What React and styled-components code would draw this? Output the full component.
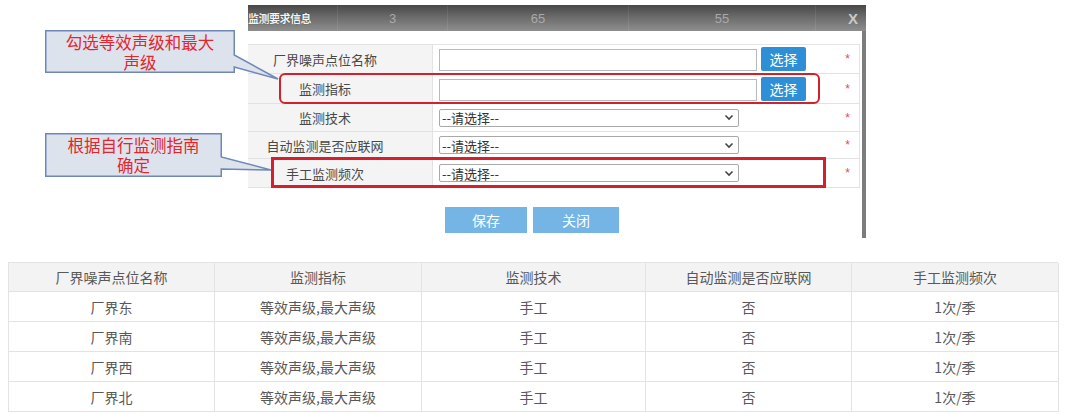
import React from "react";
import styled, { createGlobalStyle } from "styled-components";

const Global = createGlobalStyle`
  html, body { margin: 0; padding: 0; background: #fff; }
  body { width: 1080px; height: 414px; overflow: hidden; font-family: "Noto Sans CJK SC", "Noto Sans", sans-serif; }
`;

const Page = styled.div`
  display: flex;
  flex-direction: column;
  width: 1080px;
  height: 414px;
`;

const TopArea = styled.div`
  position: relative;
  padding: 5px 0 0 248px;
  height: 233px;
`;

const Dialog = styled.div`
  width: 618px;
  height: 233px;
  display: flex;
  flex-direction: column;
`;

const TitleBar = styled.div`
  height: 26px;
  display: grid;
  grid-template-columns: 89px 110px 181px 187px 51px;
  background: linear-gradient(#474747 0%, #6a6a6a 45%, #8e8e8e 100%);
  overflow: hidden;
`;

const TitleCell = styled.div`
  display: flex;
  align-items: center;
  justify-content: ${(p) => (p.$left ? "flex-start" : "center")};
  border-left: ${(p) => (p.$left ? "none" : "1px solid rgba(255,255,255,0.08)")};
  color: ${(p) => (p.$left ? "#f4f4f4" : "#a9a9a9")};
  font-size: ${(p) => (p.$left ? "11px" : "13px")};
  font-weight: ${(p) => (p.$left ? 700 : 400)};
  font-family: ${(p) => (p.$left ? '"Noto Sans CJK SC", sans-serif' : '"Liberation Sans", Arial, sans-serif')};
  white-space: nowrap;
  text-shadow: ${(p) => (p.$left ? "0 0 1px #222" : "none")};
`;

const TitleText = styled.span`
  letter-spacing: -0.5px;
`;

const CloseX = styled.span`
  margin-left: 24px;
  color: #c9c9c9;
  font-size: 15px;
  font-weight: 700;
  font-family: "Liberation Sans", Arial, sans-serif;
`;

const Body = styled.div`
  flex: 1;
  background: #fff;
  border-right: 4px solid #7c7c7c;
  padding: 13px 2px 0 0;
  display: flex;
  flex-direction: column;
`;

const Form = styled.div`
  position: relative;
  display: grid;
  grid-template-columns: 185px 402px 25px;
  border-top: 1px solid #e4e4e4;
  border-right: 1px solid #e4e4e4;
`;

const Label = styled.div`
  height: ${(p) => p.$h}px;
  display: flex;
  align-items: center;
  justify-content: center;
  padding-right: 30px;
  background: #f4f4f4;
  border-bottom: 1px solid #e2e2e2;
  border-right: 1px solid #e2e2e2;
  color: #484848;
  font-size: 13px;
  box-sizing: border-box;
  white-space: nowrap;
`;

const Value = styled.div`
  height: ${(p) => p.$h}px;
  display: flex;
  align-items: center;
  gap: 4px;
  padding-left: 6px;
  border-bottom: 1px solid #e2e2e2;
  box-sizing: border-box;
`;

const Req = styled.div`
  height: ${(p) => p.$h}px;
  display: flex;
  align-items: center;
  justify-content: center;
  color: #e04a5e;
  font-size: 12px;
  border-bottom: 1px solid #e2e2e2;
  box-sizing: border-box;
  font-family: "Liberation Sans", Arial, sans-serif;
`;

const TextInput = styled.div`
  width: 318px;
  height: 22px;
  box-sizing: border-box;
  border: 1px solid #b9b9b9;
  background: #fff;
  margin-top: 2px;
`;

const PickButton = styled.div`
  width: 45px;
  height: 24px;
  background: #2e8fd6;
  color: #fff;
  border-radius: 2px;
  font-size: 14px;
  display: flex;
  align-items: center;
  justify-content: center;
`;

const Select = styled.div`
  width: 300px;
  height: 18px;
  box-sizing: border-box;
  border: 1px solid #a9a9a9;
  border-radius: 2px;
  background: #fff;
  display: flex;
  align-items: center;
  justify-content: space-between;
  padding: 0 4px 0 2px;
  font-size: 13px;
  color: #333;
  line-height: 1;
`;

const Chevron = styled.svg`
  width: 10px;
  height: 7px;
`;

const Highlight = styled.div`
  position: absolute;
  left: ${(p) => p.$x}px;
  top: ${(p) => p.$y}px;
  width: ${(p) => p.$w}px;
  height: ${(p) => p.$h}px;
  border: ${(p) => p.$bw}px solid #d4202c;
  border-radius: ${(p) => p.$r}px;
  box-sizing: border-box;
  pointer-events: none;
`;

const ButtonRow = styled.div`
  display: flex;
  gap: 6px;
  padding-left: 197px;
  margin-top: 19px;
`;

const ActionButton = styled.div`
  width: ${(p) => p.$w}px;
  height: 26px;
  background: #74b5e5;
  color: #fff;
  font-size: 14px;
  display: flex;
  align-items: center;
  justify-content: center;
`;

const Callout = styled.div`
  position: absolute;
  left: ${(p) => p.$x}px;
  top: ${(p) => p.$y}px;
  width: ${(p) => p.$w}px;
  height: ${(p) => p.$h}px;
  display: flex;
  align-items: center;
  justify-content: center;
  z-index: 2;
`;

const CalloutShape = styled.svg`
  position: absolute;
  left: 0;
  top: 0;
  overflow: visible;
`;

const CalloutText = styled.div`
  position: relative;
  color: #e5252c;
  font-size: 16.5px;
  line-height: 20px;
  text-align: center;
  white-space: nowrap;
`;

const Bottom = styled.div`
  padding: 24px 0 0 8px;
`;

const DataTable = styled.div`
  display: grid;
  grid-template-columns: 206px 207px 224px 206px 207px;
  width: 1050px;
  border-top: 1px solid #e3e3e3;
  border-left: 1px solid #e3e3e3;
  box-sizing: border-box;
`;

const Cell = styled.div`
  height: ${(p) => (p.$head ? 29 : 30)}px;
  display: flex;
  align-items: center;
  justify-content: center;
  background: ${(p) => (p.$head ? "#f3f3f3" : "#fff")};
  border-right: 1px solid #e3e3e3;
  border-bottom: 1px solid #e3e3e3;
  box-sizing: border-box;
  color: #585858;
  font-size: 14px;
  white-space: nowrap;
`;

const formRows = [
  { label: "厂界噪声点位名称", kind: "input", h: 29 },
  { label: "监测指标", kind: "input", h: 30 },
  { label: "监测技术", kind: "select", h: 28 },
  { label: "自动监测是否应联网", kind: "select", h: 27 },
  { label: "手工监测频次", kind: "select", h: 29 },
];

const headers = ["厂界噪声点位名称", "监测指标", "监测技术", "自动监测是否应联网", "手工监测频次"];
const rows = [
  ["厂界东", "等效声级,最大声级", "手工", "否", "1次/季"],
  ["厂界南", "等效声级,最大声级", "手工", "否", "1次/季"],
  ["厂界西", "等效声级,最大声级", "手工", "否", "1次/季"],
  ["厂界北", "等效声级,最大声级", "手工", "否", "1次/季"],
];

export default function App() {
  return (
    <Page>
      <Global />
      <TopArea>
        <Callout $x={45} $y={30} $w={190} $h={43}>
          <CalloutShape width="190" height="43">
            <path
              d="M0.75,0.75 H189.25 V25 L233,49 L189.25,37 V42.25 H0.75 Z"
              fill="#dde3ed"
              stroke="#6f88b5"
              strokeWidth="1.5"
              strokeLinejoin="miter"
            />
          </CalloutShape>
          <CalloutText>
            勾选等效声级和最大
            <br />
            声级
          </CalloutText>
        </Callout>
        <Callout $x={45} $y={133} $w={177} $h={44}>
          <CalloutShape width="177" height="44">
            <path
              d="M0.75,0.75 H176.25 V24 L226,37 L176.25,36 V43.25 H0.75 Z"
              fill="#dde3ed"
              stroke="#6f88b5"
              strokeWidth="1.5"
            />
          </CalloutShape>
          <CalloutText>
            根据自行监测指南
            <br />
            确定
          </CalloutText>
        </Callout>
        <Dialog>
          <TitleBar>
            <TitleCell $left>
              <TitleText>监测要求信息</TitleText>
            </TitleCell>
            <TitleCell>3</TitleCell>
            <TitleCell>65</TitleCell>
            <TitleCell>55</TitleCell>
            <TitleCell>
              <CloseX>X</CloseX>
            </TitleCell>
          </TitleBar>
          <Body>
            <Form>
              {formRows.map((r) => (
                <React.Fragment key={r.label}>
                  <Label $h={r.h}>{r.label}</Label>
                  <Value $h={r.h}>
                    {r.kind === "input" ? (
                      <>
                        <TextInput />
                        <PickButton>选择</PickButton>
                      </>
                    ) : (
                      <Select>
                        <span>--请选择--</span>
                        <Chevron viewBox="0 0 10 7">
                          <path d="M1.5 1.5 L5 5 L8.5 1.5" fill="none" stroke="#444" strokeWidth="1.6" />
                        </Chevron>
                      </Select>
                    )}
                  </Value>
                  <Req $h={r.h}>*</Req>
                </React.Fragment>
              ))}
              <Highlight $x={31} $y={28} $w={541} $h={31} $bw={2.5} $r={6} />
              <Highlight $x={23} $y={112} $w={555} $h={31} $bw={3} $r={0} />
            </Form>
            <ButtonRow>
              <ActionButton $w={82}>保存</ActionButton>
              <ActionButton $w={86}>关闭</ActionButton>
            </ButtonRow>
          </Body>
        </Dialog>
      </TopArea>
      <Bottom>
        <DataTable>
          {headers.map((h) => (
            <Cell key={h} $head>
              {h}
            </Cell>
          ))}
          {rows.map((r, i) =>
            r.map((c, j) => <Cell key={`${i}-${j}`}>{c}</Cell>)
          )}
        </DataTable>
      </Bottom>
    </Page>
  );
}
